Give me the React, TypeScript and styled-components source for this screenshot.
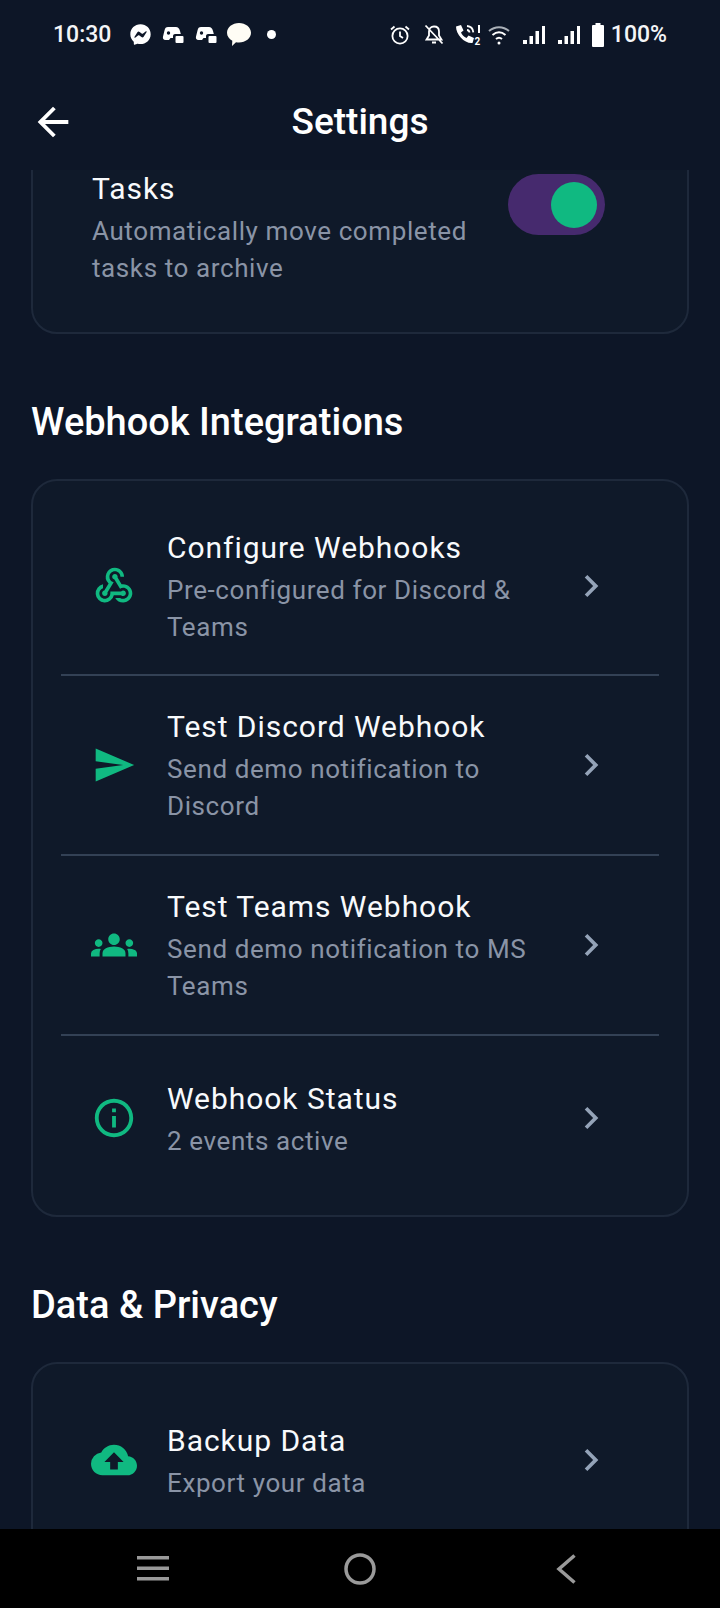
import React from "react";
import styled, { createGlobalStyle } from "styled-components";
import {
	MdArrowBack,
	MdChevronRight,
	MdCloudUpload,
	MdGroups,
	MdInfoOutline,
	MdSend,
	MdWebhook,
} from "react-icons/md";
import { FaFacebookMessenger } from "react-icons/fa";

const GlobalStyle = createGlobalStyle`
	html, body {
		margin: 0;
		padding: 0;
		background: #0d1627;
		font-family: Roboto, "Liberation Sans", sans-serif;
	}
`;

const Screen = styled.div`
	width: 720px;
	height: 1608px;
	display: flex;
	flex-direction: column;
	overflow: hidden;
	background: #0d1627;
`;

// Status bar
const StatusBar = styled.div`
	height: 69px;
	flex-shrink: 0;
	display: flex;
	align-items: center;
	justify-content: space-between;
	padding: 0 54px 0 53px;
	color: #ffffff;
`;

const StatusGroup = styled.div`
	display: flex;
	align-items: center;
`;

const StatusText = styled.span`
	font-size: 23px;
	font-weight: 500;
	color: #f4f5f7;
`;

const Time = styled(StatusText)`
	margin-right: 19px;
`;

const Percent = styled(StatusText)`
	margin-left: 7px;
	margin-right: -1px;
`;

const StatusIcon = styled.svg<{ $gap?: number }>`
	display: block;
	flex-shrink: 0;
	margin-right: ${(props) => props.$gap ?? 0}px;
`;

const Dot = styled.div`
	width: 9px;
	height: 9px;
	border-radius: 50%;
	background: #ffffff;
	margin-left: 16px;
`;

// Header
const Header = styled.div`
	height: 101px;
	flex-shrink: 0;
	box-sizing: border-box;
	display: grid;
	grid-template-columns: 1fr auto 1fr;
	align-items: center;
	padding: 5px 30px 0;
	color: #ffffff;
`;

const Title = styled.h1`
	margin: 0;
	font-size: 37px;
	line-height: 44px;
	font-weight: 500;
	color: #ffffff;
`;

// Scrolled content
const Content = styled.div`
	flex: 1;
	min-height: 0;
	overflow: hidden;
	padding: 0 31px;
`;

const SectionTitle = styled.h2`
	margin: 67px 0 36px;
	font-size: 38px;
	line-height: 42px;
	font-weight: 500;
	color: #ffffff;
`;

const Card = styled.div<{ $clipped?: boolean }>`
	background: #0f1929;
	border: 2px solid #1e293b;
	border-radius: 26px;
	padding: ${(props) => (props.$clipped ? "38px 28px 45px" : "18px 28px")};
	margin-top: ${(props) => (props.$clipped ? "-40px" : "0")};
`;

const Row = styled.div<{ $divider?: boolean; $top: number; $bottom: number }>`
	display: flex;
	align-items: center;
	padding: ${(props) => `${props.$top}px 30px ${props.$bottom}px 32px`};
	border-bottom: ${(props) => (props.$divider ? "2px solid #334155" : "none")};
`;

const ToggleRow = styled.div`
	display: flex;
	align-items: flex-start;
	padding: 0 30px 0 31px;
`;

const IconBox = styled.div`
	width: 46px;
	flex-shrink: 0;
	margin: 0 30px 4px -2px;
	display: flex;
	justify-content: center;
	color: #10b981;
`;

const RowText = styled.div`
	flex: 1;
	min-width: 0;
`;

const RowTitle = styled.div`
	font-size: 30px;
	line-height: 37px;
	letter-spacing: 0.95px;
	color: #f8fafc;
	margin-bottom: 6px;
`;

const RowSub = styled.div`
	font-size: 26px;
	line-height: 37px;
	letter-spacing: 0.6px;
	color: #8a94a6;
`;

const Chevron = styled.div`
	flex-shrink: 0;
	width: 44px;
	margin: 0 16px 4px 36px;
	display: flex;
	justify-content: center;
	color: #94a3b8;
`;

const Toggle = styled.div`
	flex-shrink: 0;
	width: 97px;
	height: 61px;
	margin: 4px 24px 0 28px;
	border-radius: 31px;
	background: #462a6e;
	display: flex;
	align-items: center;
	justify-content: flex-end;
	padding-right: 8px;
	box-sizing: border-box;
`;

const Knob = styled.div`
	width: 46px;
	height: 46px;
	border-radius: 50%;
	background: #10b981;
`;

// Navigation bar
const NavBar = styled.div`
	height: 79px;
	flex-shrink: 0;
	background: #000000;
	display: flex;
	align-items: center;
	justify-content: space-between;
	padding: 0 144px 0 137px;
`;

const GameIcon = ({ gap }: { gap: number }) => (
	<StatusIcon $gap={gap} width="22" height="18" viewBox="0 0 22 18" fill="#fff">
		<path d="M6 1h8c2 0 3 1 4 4l.8 3H13c-1 0-2 .8-2 2v2H8.5L7 14H3.5C1.5 14 .5 12.5 1 10.5l1.5-6C3 2 4 1 6 1z" />
		<circle cx="6.5" cy="7" r="1.7" fill="#0d1627" />
		<rect x="13.5" y="10" width="8" height="7" rx="1" />
	</StatusIcon>
);

const SignalIcon = ({ gap }: { gap: number }) => (
	<StatusIcon $gap={gap} width="22" height="20" viewBox="0 0 22 20" fill="#fff">
		<rect x="0" y="15" width="4" height="4" />
		<rect x="6.5" y="11" width="3.5" height="8" />
		<rect x="12.5" y="6" width="3.5" height="13" />
		<rect x="19" y="1" width="3" height="18" />
	</StatusIcon>
);

const StatusIcons = () => (
	<StatusBar>
		<StatusGroup>
			<Time>10:30</Time>
			<StatusIcon as={FaFacebookMessenger} size={21} $gap={11} />
			<GameIcon gap={11} />
			<GameIcon gap={10} />
			<StatusIcon width="24" height="23" viewBox="0 0 24 23" fill="#fffdf5">
				<path d="M12 0c6.6 0 12 4.4 12 9.8s-5.4 9.8-12 9.8c-1 0-2-.1-3-.3L5 23l.3-5.2C2 16 0 13.100 0 9.800 0 4.400 5.400 0 12 0z" />
			</StatusIcon>
			<Dot />
		</StatusGroup>
		<StatusGroup>
			<StatusIcon $gap={14} width="20" height="20" viewBox="0 0 20 20" fill="none" stroke="#fff" strokeWidth="1.8">
				<circle cx="10" cy="11" r="7.6" />
				<path d="M10 6.500V11l3 2M1 4.500 4.500 1.500M19 4.500l-3.500-3" />
			</StatusIcon>
			<StatusIcon $gap={11} width="20" height="21" viewBox="0 0 20 21" fill="none" stroke="#fff" strokeWidth="1.8">
				<path d="M5 7.500c0-3 2-5 5-5s5 2 5 5v4l2.500 4H2.500L5 11.500zM8 18.500h4M1.500 1.500l17 18" />
			</StatusIcon>
			<StatusIcon $gap={6} width="27" height="22" viewBox="0 0 27 22" fill="#fff">
				<path d="M1 2.500 6 1l2.500 5.500-2.500 2c1 2.500 3 4.500 5.500 5.500l2-2.500L19 14l-1.500 5C10 20 1 11 1 2.500z" />
				<path d="M12 2c3.500.3 6 2.800 6.300 6.300M12 6c1.500.2 2.300 1 2.500 2.500" fill="none" stroke="#fff" strokeWidth="1.800" />
				<rect x="23" y="1" width="2" height="8" />
				<text x="19.500" y="21" fontSize="10" fontWeight="700" fontFamily="Roboto, sans-serif">2</text>
			</StatusIcon>
			<StatusIcon $gap={13} width="22" height="20" viewBox="0 0 22 20" fill="none" stroke="#fff" strokeWidth="2">
				<path d="M1 6c6-5 14-5 20 0" stroke="#aab0b8" />
				<path d="M4.500 10c4-3.400 9-3.400 13 0M8 14c2-1.700 4-1.700 6 0" />
				<circle cx="11" cy="18" r="1.500" fill="#fff" stroke="none" />
			</StatusIcon>
			<SignalIcon gap={13} />
			<SignalIcon gap={12} />
			<StatusIcon width="12" height="24" viewBox="0 0 12 24" fill="#fff">
				<path d="M3.500 0h5v2H11a1 1 0 0 1 1 1v20a1 1 0 0 1-1 1H1a1 1 0 0 1-1-1V3a1 1 0 0 1 1-1h2.500z" />
			</StatusIcon>
			<Percent>100%</Percent>
		</StatusGroup>
	</StatusBar>
);

type ItemProps = {
	icon: React.ReactNode;
	title: string;
	sub: string;
	top: number;
	bottom: number;
	divider?: boolean;
};

const Item = ({ icon, title, sub, top, bottom, divider }: ItemProps) => (
	<Row $divider={divider} $top={top} $bottom={bottom}>
		<IconBox>{icon}</IconBox>
		<RowText>
			<RowTitle>{title}</RowTitle>
			<RowSub>{sub}</RowSub>
		</RowText>
		<Chevron>
			<MdChevronRight size={44} />
		</Chevron>
	</Row>
);

const App = () => {
	return (
		<Screen>
			<GlobalStyle />
			<StatusIcons />
			<Header>
				<MdArrowBack size={46} />
				<Title>Settings</Title>
			</Header>
			<Content>
				<Card $clipped>
					<ToggleRow>
						<RowText>
							<RowTitle>Tasks</RowTitle>
							<RowSub>Automatically move completed tasks to archive</RowSub>
						</RowText>
						<Toggle>
							<Knob />
						</Toggle>
					</ToggleRow>
				</Card>
				<SectionTitle>Webhook Integrations</SectionTitle>
				<Card>
					<Item
						divider
						top={30}
						bottom={28}
						icon={<MdWebhook size={44} />}
						title="Configure Webhooks"
						sub="Pre-configured for Discord & Teams"
					/>
					<Item
						divider
						top={32}
						bottom={29}
						icon={<MdSend size={44} />}
						title="Test Discord Webhook"
						sub="Send demo notification to Discord"
					/>
					<Item
						divider
						top={32}
						bottom={29}
						icon={<MdGroups size={46} />}
						title="Test Teams Webhook"
						sub="Send demo notification to MS Teams"
					/>
					<Item
						top={44}
						bottom={37}
						icon={<MdInfoOutline size={46} />}
						title="Webhook Status"
						sub="2 events active"
					/>
				</Card>
				<SectionTitle>Data & Privacy</SectionTitle>
				<Card>
					<Item
						top={40}
						bottom={37}
						icon={<MdCloudUpload size={46} />}
						title="Backup Data"
						sub="Export your data"
					/>
				</Card>
			</Content>
			<NavBar>
				<svg width="32" height="25" viewBox="0 0 32 25" fill="#9a9a9a">
					<rect x="0" y="0" width="32" height="3.500" />
					<rect x="0" y="10.500" width="32" height="3.500" />
					<rect x="0" y="21" width="32" height="3.500" />
				</svg>
				<svg width="32" height="32" viewBox="0 0 32 32" fill="none" stroke="#9a9a9a" strokeWidth="3.500">
					<circle cx="16" cy="16" r="14" />
				</svg>
				<svg width="25" height="30" viewBox="-5 0 25 30" fill="none" stroke="#9a9a9a" strokeWidth="3.500">
					<path d="M18.500 1.500 3 15l15.500 13.500" />
				</svg>
			</NavBar>
		</Screen>
	);
};

export default App;
